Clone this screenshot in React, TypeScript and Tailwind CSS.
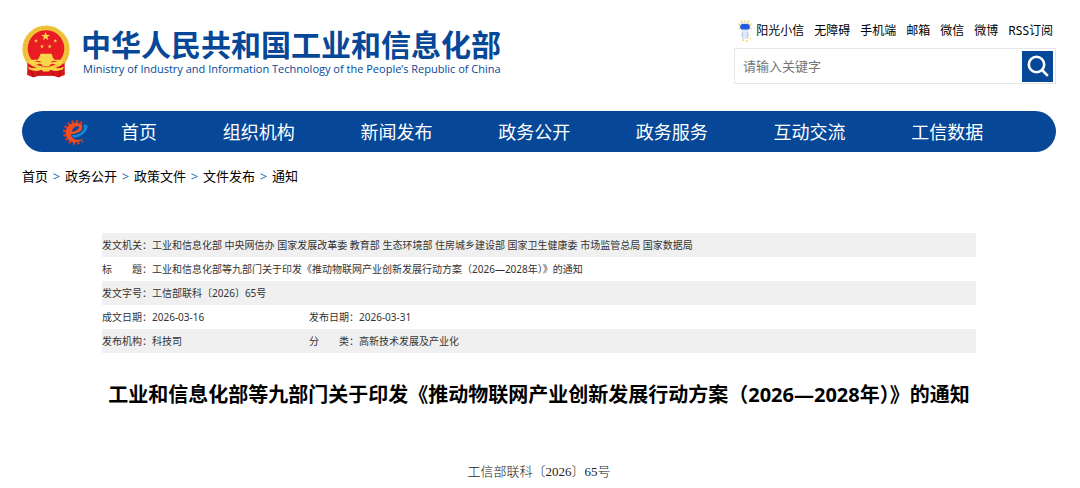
import React from "react";

const utilityLinks = ["阳光小信", "无障碍", "手机端", "邮箱", "微信", "微博", "RSS订阅"];

const sections = ["组织机构", "新闻发布", "政务公开", "政务服务", "互动交流", "工信数据"];

const crumbs = ["首页", "政务公开", "政策文件", "文件发布", "通知"];

const star = "M0 -10L2.4 -3.2H9.5L3.8 1.2L5.9 8.1L0 4L-5.9 8.1L-3.8 1.2L-9.5 -3.2H-2.4Z";

function Emblem() {
  return (
    <svg viewBox="0 0 144 156" className="h-[53px] w-12 shrink-0" aria-hidden="true">
      <path d="M20 112L16 148L34 155L50 150H94L110 155L128 148L124 112Z" fill="#d8141c" />
      <circle cx="72" cy="71" r="71" fill="#f0c53c" />
      <circle cx="72" cy="71" r="64" fill="none" stroke="#dca52a" strokeWidth="2" strokeDasharray="7 4" />
      <path d="M16 112Q72 156 128 112L128 148L110 155L94 151H50L34 155L16 148Z" fill="#d8141c" />
      <circle cx="72" cy="69" r="55" fill="#e81c22" />
      <g fill="#f9d648">
        <path d={star} transform="translate(71 33) scale(1.4)" />
        <path d={star} transform="translate(42 46) scale(.65)" />
        <path d={star} transform="translate(100 46) scale(.65)" />
        <path d={star} transform="translate(60 63) scale(.65)" />
        <path d={star} transform="translate(83 63) scale(.65)" />
        <path d="M52 93L56 85H88L92 93V98H96V106H48V98H52Z" />
        <path d="M25 103H119L124 109L112 121Q94 112 86 116L81 122H63L58 116Q50 112 32 121L20 109Z" />
        <path d="M18 124Q42 134 56 122L62 128H82L88 122Q102 134 126 124L122 132Q100 140 86 133L80 138H64L58 133Q44 140 22 132Z" />
      </g>
      <path d="M36 108Q50 104 60 111Q46 109 36 108ZM108 108Q94 104 84 111Q98 109 108 108Z" fill="#e81c22" />
      <path d="M28 136L34 155M116 136L110 155M50 140V149M94 140V149" stroke="#a80d14" strokeWidth="3" />
    </svg>
  );
}

function Mascot() {
  return (
    <svg viewBox="0 0 14 22" className="h-[22px] w-3.5 shrink-0" aria-hidden="true">
      <g stroke="#f6cf4a" strokeWidth="1.500" strokeLinecap="round">
        <path d="M4 2.200L3.300 1.200M7 1.600V.9M10 2.200L10.700 1.200M1.600 4.600L1 4M12.400 4.600L13 4M1 8.500H.9M13 8.500H13.100" />
      </g>
      <ellipse cx="7" cy="6.800" rx="5.600" ry="4.600" fill="#d3e3fa" />
      <rect x="2.200" y="4" width="9.600" height="5.600" rx="2.600" fill="#2458d6" />
      <path d="M4 11H10L12 15.500L10.500 16.500V19H4.500V16.500L2.500 15.500Z" fill="#dfe9f7" />
      <path d="M4.500 12V18M9.500 12V18" stroke="#b3cbec" strokeWidth="1" />
      <path d="M4.500 20H6M8 21H9.500M12 18.500H13" stroke="#f2c440" strokeWidth="1.300" />
    </svg>
  );
}

function GearE() {
  return (
    <svg viewBox="0 0 78 78" className="h-[26px] w-[26px] shrink-0" aria-hidden="true">
      <path d="M60 14A33 33 0 1 0 62 65" fill="none" stroke="#d93a20" strokeWidth="8" strokeDasharray="7 6" />
      <path
        d="M60 18C48 8 30 9 19 20C7 33 9 55 23 65C36 73 54 71 64 57C54 64 42 65 34 58C29 54 27 49 28 45C44 45 60 38 61 27C61 23 60 20 60 18ZM30 38C31 29 40 21 48 22C54 24 50 30 44 34C40 36 35 38 30 38Z"
        fill="#f04e22"
        fillRule="evenodd"
      />
      <path d="M30 48C48 48 64 38 66 26C67 21 65 18 62 17C70 15 76 17 77 22C78 36 58 55 38 56C33 55 30 52 30 48Z" fill="#1683cf" />
      <path d="M30 47C47 47 63 38 64 26" fill="none" stroke="#064797" strokeWidth="2" />
    </svg>
  );
}

function Label({ children }: { children: string }) {
  return (
    <th scope="row" className="w-[50px] p-0 text-left font-normal">
      <span className="flex">
        {children.length === 2 ? (
          <span className="flex w-10 justify-between">
            <span>{children[0]}</span>
            <span>{children[1]}</span>
          </span>
        ) : (
          children
        )}
        ：
      </span>
    </th>
  );
}

export default function App() {
  return (
    <div className="bg-white pr-6 pl-[22px] font-['Noto_Sans','Noto_Sans_CJK_SC',sans-serif] text-black">
      <header className="flex items-start justify-between pt-5">
        <a href="#" className="flex items-start gap-[11px] pt-[5px] text-[#064797]">
          <Emblem />
          <span className="block pt-1">
            <span className="block text-[30px] leading-8 font-bold whitespace-nowrap">中华人民共和国工业和信息化部</span>
            <span className="block pl-0.5 font-['Open_Sans','Noto_Sans',sans-serif] text-[11px] leading-4 whitespace-nowrap">
              Ministry of Industry and Information Technology of the People’s Republic of China
            </span>
          </span>
        </a>
        <div className="w-[322px]">
          <ul className="flex items-center justify-end gap-2.5 pr-[3px] text-xs leading-5 whitespace-nowrap">
            {utilityLinks.map((text, i) => (
              <li key={text}>
                <a href="#" className="flex items-center gap-1">
                  {i === 0 && <Mascot />}
                  {text}
                </a>
              </li>
            ))}
          </ul>
          <form className="mt-1.5 flex h-9 items-center border border-[#e6e6e6] pr-0.5" onSubmit={(e) => e.preventDefault()}>
            <input
              type="text"
              aria-label="关键字"
              placeholder="请输入关键字"
              className="min-w-0 flex-1 px-2 pt-0.5 text-[13px] outline-none placeholder:text-[#757575]"
            />
            <button type="submit" aria-label="搜索" className="flex h-[31px] w-[31px] items-center justify-center bg-[#064797]">
              <svg viewBox="0 0 22 22" className="h-[22px] w-[22px]" fill="none" stroke="#fff" strokeWidth="2.6" aria-hidden="true">
                <circle cx="9.500" cy="9.500" r="7.700" />
                <path d="M15 15L20.800 20.800" />
              </svg>
            </button>
          </form>
        </div>
      </header>

      <nav className="mt-[27px] flex h-[41px] items-center rounded-full bg-[#064797] px-10 text-lg whitespace-nowrap text-white">
        <GearE />
        <a href="#" className="w-[102px] text-center">
          首页
        </a>
        {sections.map((text) => (
          <a key={text} href="#" className="flex-1 text-center">
            {text}
          </a>
        ))}
      </nav>

      <ol className="mt-3.5 flex text-[13px] leading-5">
        {crumbs.map((text, i) => (
          <li key={text} className="flex">
            {i > 0 && <span className="w-[17px] text-center text-[#2a6db8]">&gt;</span>}
            <a href="#">{text}</a>
          </li>
        ))}
      </ol>

      <main className="px-20 pt-[47px]">
        <table className="w-full table-fixed border-collapse text-[10px] text-[#333]">
          <colgroup>
            <col className="w-[50px]" />
            <col className="w-[157px]" />
            <col className="w-[50px]" />
            <col />
          </colgroup>
          <tbody>
            <tr className="h-6 bg-[#f0f0f0]">
              <Label>发文机关</Label>
              <td colSpan={3} className="p-0">
                工业和信息化部 中央网信办 国家发展改革委 教育部 生态环境部 住房城乡建设部 国家卫生健康委 市场监管总局 国家数据局
              </td>
            </tr>
            <tr className="h-6">
              <Label>标题</Label>
              <td colSpan={3} className="p-0">
                工业和信息化部等九部门关于印发《推动物联网产业创新发展行动方案（2026—2028年）》的通知
              </td>
            </tr>
            <tr className="h-6 bg-[#f0f0f0]">
              <Label>发文字号</Label>
              <td colSpan={3} className="p-0">
                工信部联科〔2026〕65号
              </td>
            </tr>
            <tr className="h-6">
              <Label>成文日期</Label>
              <td className="p-0">2026-03-16</td>
              <Label>发布日期</Label>
              <td className="p-0">2026-03-31</td>
            </tr>
            <tr className="h-6 bg-[#f0f0f0]">
              <Label>发布机构</Label>
              <td className="p-0">科技司</td>
              <Label>分类</Label>
              <td className="p-0">高新技术发展及产业化</td>
            </tr>
          </tbody>
        </table>

        <h1 className="mt-7 text-center text-xl leading-7 font-bold">
          工业和信息化部等九部门关于印发《推动物联网产业创新发展行动方案（2026—2028年）》的通知
        </h1>

        <p className="mt-[53px] pb-1 text-center font-['Liberation_Serif','Noto_Sans_CJK_SC',serif] text-[13px] leading-5 font-light text-[#222]">
          工信部联科〔2026〕65号
        </p>
      </main>
    </div>
  );
}
